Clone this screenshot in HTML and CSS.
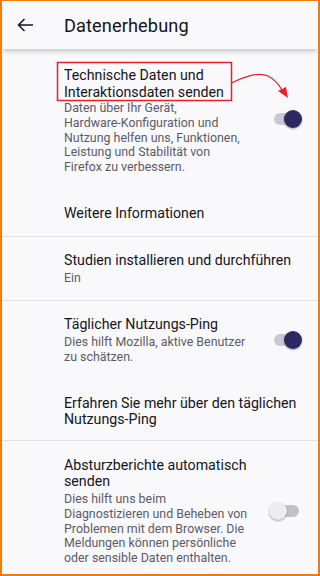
FILE: index.html
```html
<!DOCTYPE html>
<html lang="de">
<head>
<meta charset="utf-8">
<link rel="stylesheet" href="styles.css">
</head>
<body>
<div class="frame">
  <header class="appbar">
    <svg class="back" width="16" height="14" viewBox="0 0 16 14"><path d="M16 7H1.5M7.5 1L1.5 7l6 6" fill="none" stroke="#15141a" stroke-width="1.5"/></svg>
    <h1 class="appbar-title">Datenerhebung</h1>
  </header>
  <main class="list">
    <div class="pref p1">
      <div class="text">
        <div class="title">Technische Daten und Interaktionsdaten senden</div>
        <div class="desc">Daten über Ihr Gerät, <span class="nowrap">Hardware-Konfiguration</span> und Nutzung helfen uns, Funktionen, Leistung und Stabilität von Firefox zu verbessern.</div>
      </div>
      <div class="switch on"><span class="track"></span><span class="thumb"></span></div>
    </div>
    <div class="pref p2">
      <div class="text"><div class="title">Weitere Informationen</div></div>
    </div>
    <div class="divider"></div>
    <div class="pref p3">
      <div class="text">
        <div class="title">Studien installieren und durchführen</div>
        <div class="desc">Ein</div>
      </div>
    </div>
    <div class="divider"></div>
    <div class="pref p4">
      <div class="text">
        <div class="title">Täglicher Nutzungs-Ping</div>
        <div class="desc">Dies hilft Mozilla, aktive Benutzer zu schätzen.</div>
      </div>
      <div class="switch on"><span class="track"></span><span class="thumb"></span></div>
    </div>
    <div class="pref p5">
      <div class="text"><div class="title">Erfahren Sie mehr über den täglichen Nutzungs-Ping</div></div>
    </div>
    <div class="divider"></div>
    <div class="pref p6">
      <div class="text">
        <div class="title">Absturzberichte automatisch senden</div>
        <div class="desc">Dies hilft uns beim Diagnostizieren und Beheben von Problemen mit dem Browser. Die Meldungen können persönliche oder sensible Daten enthalten.</div>
      </div>
      <div class="switch off"><span class="track"></span><span class="thumb"></span></div>
    </div>
  </main>
  <svg class="annot" width="320" height="576" viewBox="0 0 320 576">
    <rect x="57.5" y="62.5" width="174" height="38" fill="none" stroke="#e5222b" stroke-width="1.5"/>
    <path d="M231.5 83 C246 76 258 72 268 76 C276 80 280 86 283 92" fill="none" stroke="#e5222b" stroke-width="1.3"/>
    <path d="M278 91 L288 98 L286 87 Z" fill="#e5222b"/>
  </svg>
</div>
</body>
</html>
```
FILE: styles.css
```css
* { box-sizing: border-box; }
html, body { margin: 0; padding: 0; }
body { width: 320px; height: 576px; overflow: hidden; background: #f9f9fb; font-family: Roboto, "Noto Sans", sans-serif; }
.frame { position: relative; width: 320px; height: 576px; border: 2px solid #f57a0c; border-top-width: 1px; background: #f9f9fb; overflow: hidden; }
.appbar { position: relative; z-index: 1; height: 48px; display: flex; align-items: center; background: #f9f9fb; box-shadow: 0 2px 5px rgba(0,0,0,0.22); }
.back { margin-left: 15px; flex: none; }
.appbar-title { margin: 0 0 0 31px; font-size: 18.2px; font-weight: 400; color: #15141a; letter-spacing: 0.1px; }
.list { display: flex; flex-direction: column; }
.pref { display: flex; align-items: center; padding: 0 16px 0 62px; }
.text { flex: 1; min-width: 0; }
.title { font-size: 14.2px; line-height: 16.5px; color: #15141a; }
.desc { font-size: 12.4px; line-height: 14.75px; color: #5b5b66; margin-top: 2.5px; }
.nowrap { white-space: nowrap; }
.p1 { padding-top: 18px; padding-bottom: 16px; }
.p1 .desc { margin-top: 1px; }
.p1 .switch { margin-top: -3px; }
.p2 { padding-top: 14px; padding-bottom: 15px; }
.p3 { padding-top: 15px; padding-bottom: 14px; }
.p4 { padding-top: 15px; padding-bottom: 18px; }
.p5 { padding-top: 12px; padding-bottom: 12px; }
.p6 { padding-top: 16px; padding-bottom: 16px; }
.divider { height: 1px; background: #e0e0e6; }
.switch { position: relative; width: 53px; height: 20px; flex: none; }
.track { position: absolute; left: 25px; top: 4px; width: 25px; height: 12px; border-radius: 6px; }
.thumb { position: absolute; top: 1px; width: 18px; height: 18px; border-radius: 50%; box-shadow: 0 1px 2px rgba(0,0,0,0.35); }
.on .track { background: #c9c8d6; }
.on .thumb { left: 35px; background: #2e2862; }
.off .track { background: #c2c2c6; }
.off .thumb { left: 20px; background: #ececef; }
.annot { position: absolute; left: -2px; top: -1px; pointer-events: none; }
```
